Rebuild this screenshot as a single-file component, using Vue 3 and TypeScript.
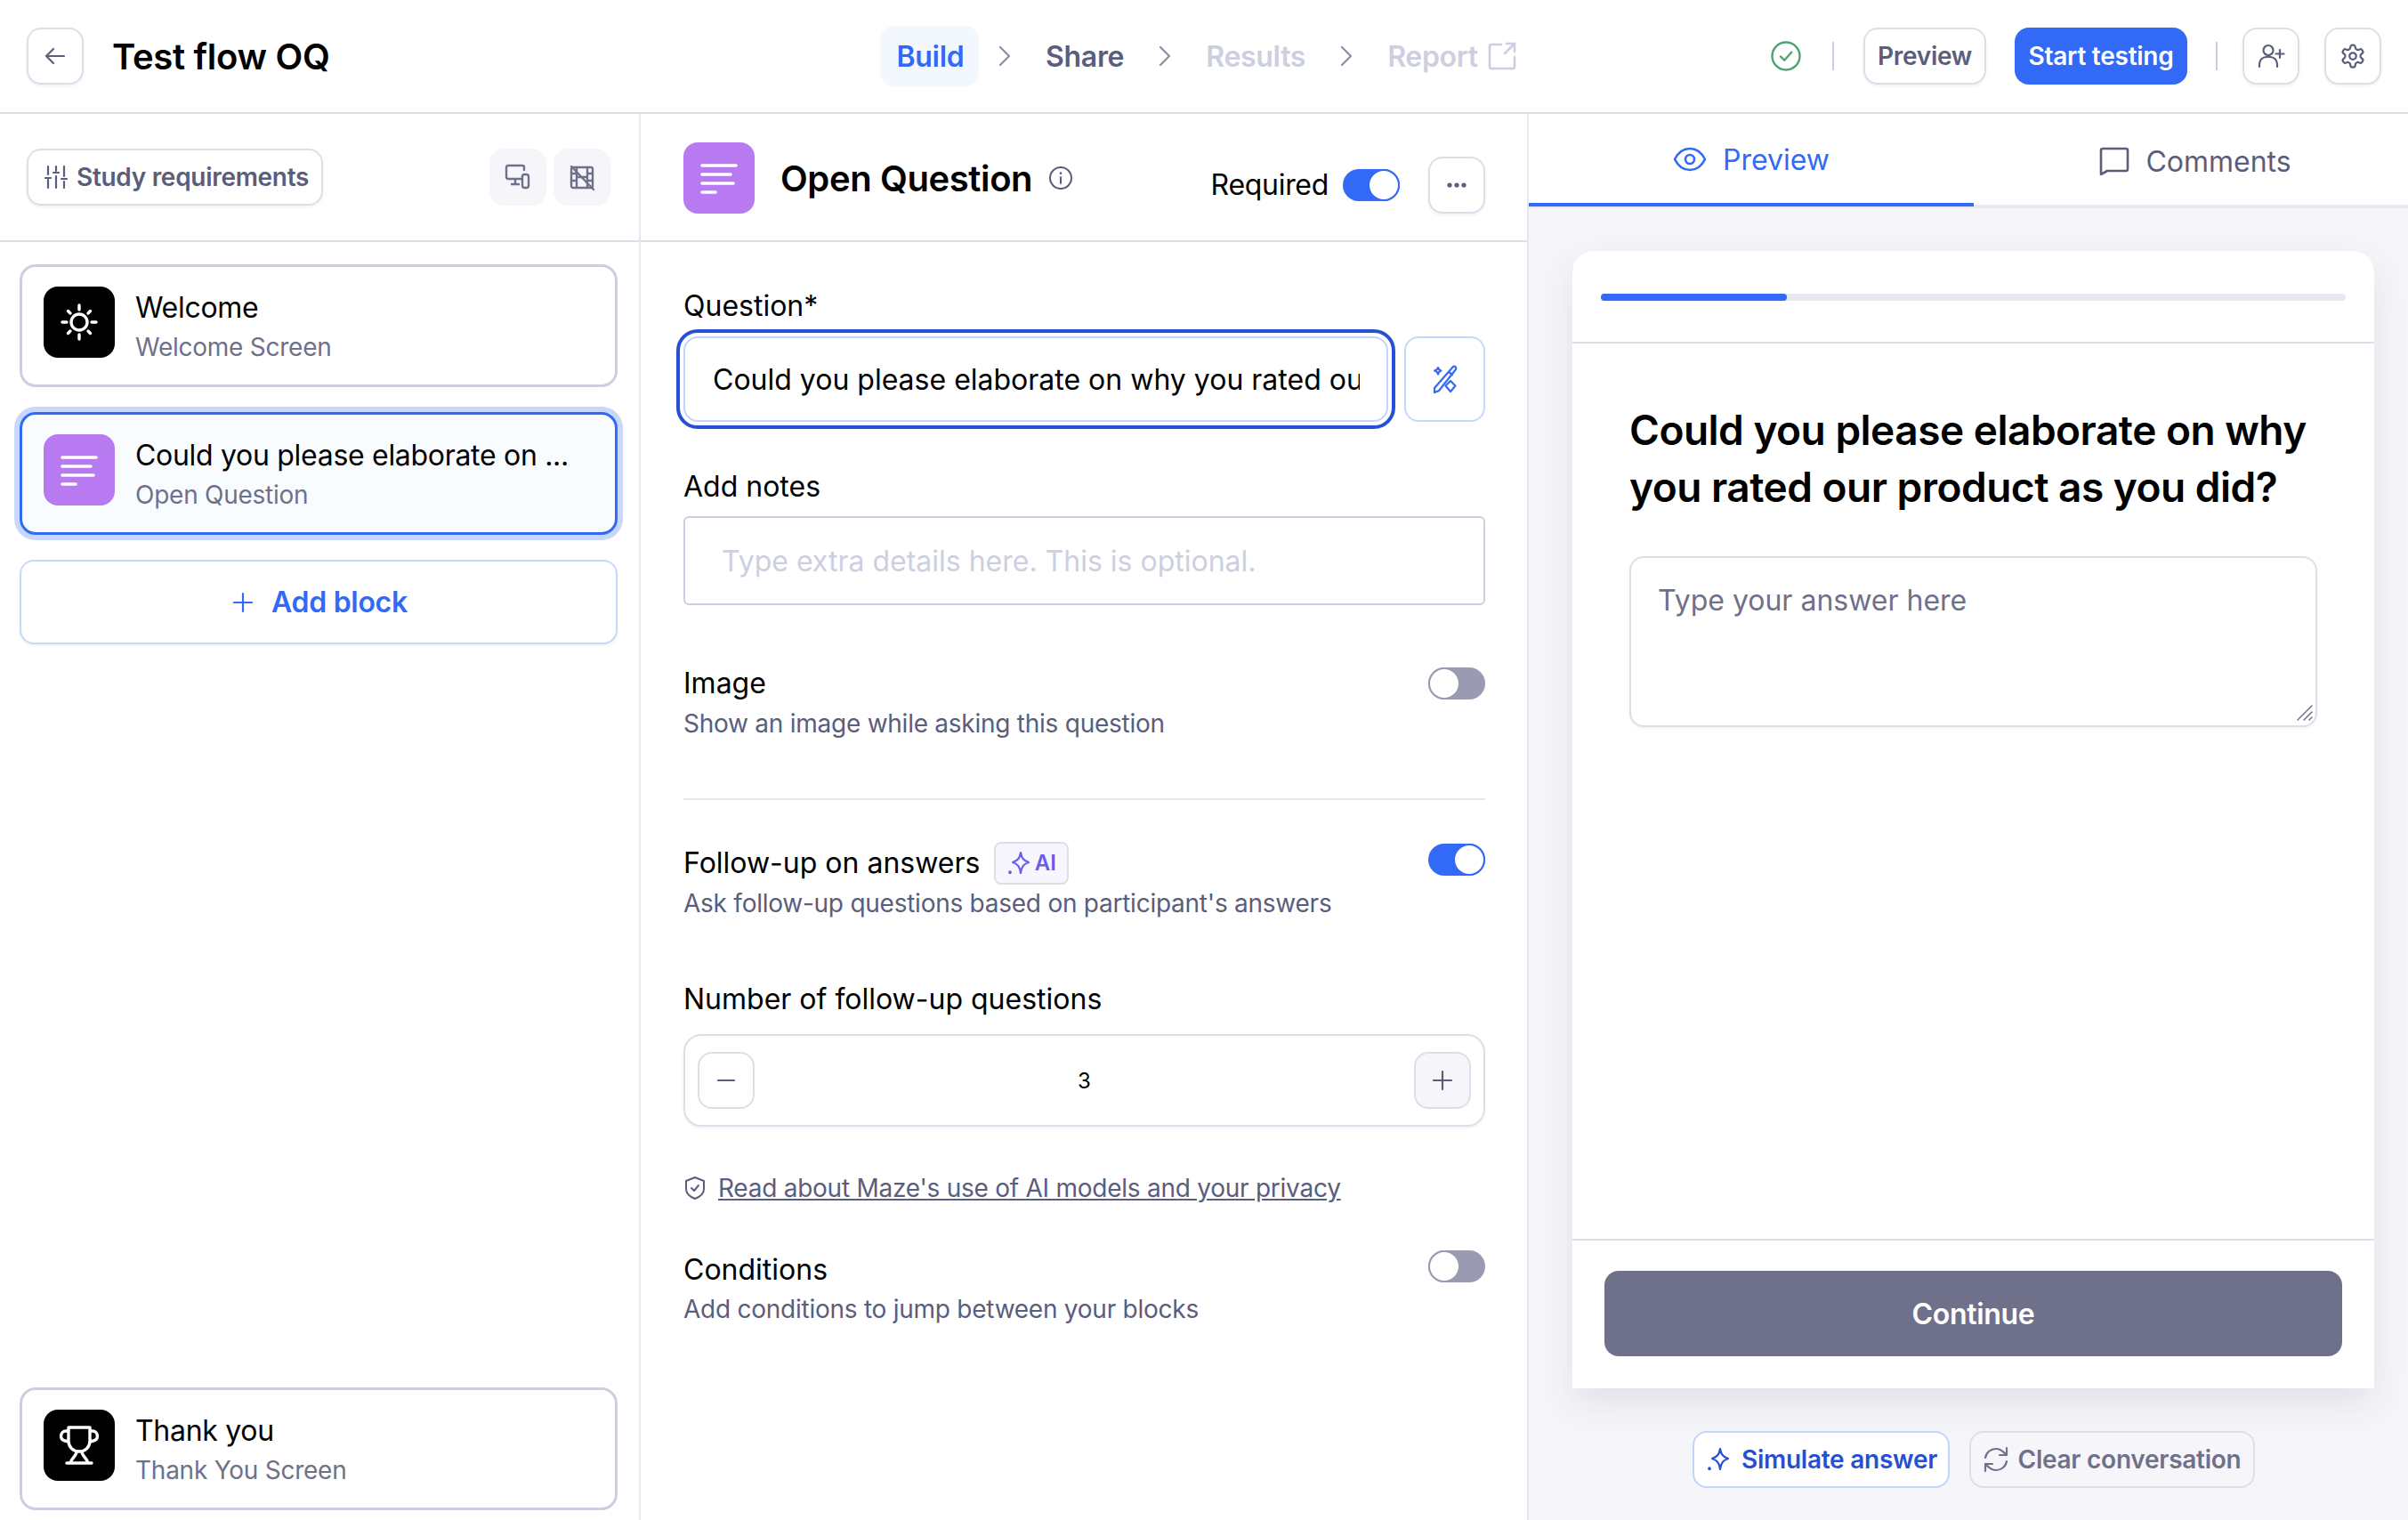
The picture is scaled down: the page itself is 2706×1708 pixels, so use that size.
<template>
  <div class="page">
    <header class="topbar">
      <div class="top-left">
        <button class="icon-btn">
          <svg width="32" height="32" viewBox="0 0 32 32" fill="none" stroke="#5a5d7c" stroke-width="2.2" stroke-linecap="round" stroke-linejoin="round"><path d="M26 16H7M14 8l-8 8 8 8" /></svg>
        </button>
        <h1 class="flow-title">Test flow OQ</h1>
      </div>
      <nav class="steps">
        <span class="step active">Build</span>
        <svg class="chev first" width="16" height="28" viewBox="0 0 16 28" fill="none"><path d="M3 4l10 10L3 24" /></svg>
        <span class="step share">Share</span>
        <svg class="chev" width="16" height="28" viewBox="0 0 16 28" fill="none"><path d="M3 4l10 10L3 24" /></svg>
        <span class="step off results">Results</span>
        <svg class="chev" width="16" height="28" viewBox="0 0 16 28" fill="none"><path d="M3 4l10 10L3 24" /></svg>
        <span class="step off report">Report</span>
        <svg class="ext" width="32" height="32" viewBox="0 0 32 32" fill="none" stroke="#cdcfe0" stroke-width="2.6" stroke-linecap="round" stroke-linejoin="round"><path d="M15 3H4a2 2 0 0 0-2 2v23a2 2 0 0 0 2 2h24a2 2 0 0 0 2-2V17M19 13 30 2M21 2h9v9" /></svg>
      </nav>
      <div class="top-right">
        <svg class="saved" width="36" height="36" viewBox="0 0 36 36" fill="none" stroke="#4fa373" stroke-width="2.4" stroke-linecap="round" stroke-linejoin="round"><circle cx="18" cy="18" r="15.5" /><path d="M12 18.5l4.2 4.2 8-9" /></svg>
        <span class="sep first"></span>
        <button class="btn plain">Preview</button>
        <button class="btn primary">Start testing</button>
        <span class="sep"></span>
        <button class="icon-btn">
          <svg width="32" height="32" viewBox="0 0 32 32" fill="none" stroke="#5a5d7c" stroke-width="2.2" stroke-linecap="round" stroke-linejoin="round"><circle cx="13" cy="9.5" r="5.5" /><path d="M3 28v-3a8 8 0 0 1 8-8h4a8 8 0 0 1 8 8v3M26 9v9M21.5 13.5h9" /></svg>
        </button>
        <button class="icon-btn gear">
          <svg width="30" height="30" viewBox="0 0 24 24" fill="none" stroke="#5a5d7c" stroke-width="1.8" stroke-linecap="round" stroke-linejoin="round"><path d="M12.22 2h-.44a2 2 0 0 0-2 2v.18a2 2 0 0 1-1 1.730l-.43.25a2 2 0 0 1-2 0l-.15-.08a2 2 0 0 0-2.730.73l-.22.38a2 2 0 0 0 .73 2.730l.15.1a2 2 0 0 1 1 1.720v.51a2 2 0 0 1-1 1.740l-.15.09a2 2 0 0 0-.73 2.730l.22.38a2 2 0 0 0 2.730.73l.15-.08a2 2 0 0 1 2 0l.43.25a2 2 0 0 1 1 1.730V20a2 2 0 0 0 2 2h.44a2 2 0 0 0 2-2v-.18a2 2 0 0 1 1-1.730l.43-.25a2 2 0 0 1 2 0l.15.08a2 2 0 0 0 2.730-.73l.22-.39a2 2 0 0 0-.73-2.730l-.15-.08a2 2 0 0 1-1-1.740v-.5a2 2 0 0 1 1-1.740l.15-.09a2 2 0 0 0 .73-2.730l-.22-.38a2 2 0 0 0-2.730-.73l-.15.08a2 2 0 0 1-2 0l-.43-.25a2 2 0 0 1-1-1.730V4a2 2 0 0 0-2-2z" /><circle cx="12" cy="12" r="3" /></svg>
        </button>
      </div>
    </header>

    <div class="columns">
      <aside class="left">
        <div class="left-head">
          <button class="req-btn">
            <svg width="26" height="28" viewBox="0 0 26 28" fill="none" stroke="#5a5d7c" stroke-width="2.2" stroke-linecap="round"><path d="M4 2v9M4 17v9M13 2v5M13 13v13M22 2v11M22 19v7M1 15h6M10 9h6M19 16h6" /></svg>
            Study requirements
          </button>
          <div class="head-icons">
            <button class="soft-btn">
              <svg width="30" height="30" viewBox="0 0 30 30" fill="none" stroke="#6e7189" stroke-width="2.400" stroke-linecap="round" stroke-linejoin="round"><path d="M19 17H4a2 2 0 0 1-2-2V4a2 2 0 0 1 2-2h16a2 2 0 0 1 2 2v3M12 17v6M8 23h8" /><rect x="20" y="12" width="7" height="15" rx="2.500" /></svg>
            </button>
            <button class="soft-btn">
              <svg width="30" height="30" viewBox="0 0 30 30" fill="none" stroke="#6e7189" stroke-width="2.400" stroke-linecap="round" stroke-linejoin="round"><path d="M3 3l25 26" /><rect x="3" y="4" width="24" height="23" rx="2" /><path d="M9 4v23M21 4v23M3 11h6M3 19h6M21 11h6M21 19h6M9 15h12" /></svg>
            </button>
          </div>
        </div>

        <div class="block-list">
          <div class="block">
            <span class="tile dark">
              <svg width="80" height="80" viewBox="0 0 80 80" fill="none" stroke="#fff" stroke-width="3.400" stroke-linecap="round"><circle cx="40" cy="40" r="9" /><path d="M40 21v5M40 54v5M21 40h5M54 40h5M27.500 27.500l2.500 2.500M50 50l2.500 2.500M27.500 52.500 30 50M50 30l2.500-2.500" /></svg>
            </span>
            <div class="block-text">
              <div class="block-name">Welcome</div>
              <div class="block-type">Welcome Screen</div>
            </div>
          </div>
          <div class="block selected">
            <span class="tile purple">
              <svg width="80" height="80" viewBox="0 0 80 80" fill="none" stroke="#fff" stroke-width="3.600" stroke-linecap="round"><path d="M21 26h38M21 36h32M21 46h35M21 56h15" /></svg>
            </span>
            <div class="block-text">
              <div class="block-name">Could you please elaborate on ...</div>
              <div class="block-type">Open Question</div>
            </div>
          </div>
          <button class="add-block">
            <svg width="24" height="24" viewBox="0 0 24 24" fill="none" stroke="#3269f6" stroke-width="2.200" stroke-linecap="round"><path d="M12 2v20M2 12h20" /></svg>
            Add block
          </button>
        </div>

        <div class="block last">
          <span class="tile dark">
            <svg width="80" height="80" viewBox="0 0 80 80" fill="none" stroke="#fff" stroke-width="3.400" stroke-linecap="round" stroke-linejoin="round"><path d="M28 20h24v15c0 7-5 12-12 12s-12-5-12-12zM28 24h-3c-6 0-8 9-1 11l4 1M52 24h3c6 0 8 9 1 11l-4 1M37 47c0 5-6 8-7 13M43 47c0 5 6 8 7 13M26 60h28" /></svg>
          </span>
          <div class="block-text">
            <div class="block-name">Thank you</div>
            <div class="block-type">Thank You Screen</div>
          </div>
        </div>
      </aside>

      <main class="middle">
        <div class="mid-head">
          <span class="tile purple">
            <svg width="80" height="80" viewBox="0 0 80 80" fill="none" stroke="#fff" stroke-width="3.600" stroke-linecap="round"><path d="M21 26h38M21 36h32M21 46h35M21 56h15" /></svg>
          </span>
          <h2 class="mid-title">Open Question</h2>
          <svg class="info" width="28" height="28" viewBox="0 0 28 28" fill="none" stroke="#5a5d7c" stroke-width="2" stroke-linecap="round"><circle cx="14" cy="14" r="12" /><path d="M14 13v7" /><path d="M14 8.500v.2" stroke-width="2.600" /></svg>
          <div class="required">
            <span>Required</span>
            <span class="toggle" :class="{ on: required }"></span>
            <button class="icon-btn dots">
              <svg width="24" height="8" viewBox="0 0 24 8" fill="#5a5d7c"><circle cx="4" cy="4" r="2.600" /><circle cx="12" cy="4" r="2.600" /><circle cx="20" cy="4" r="2.600" /></svg>
            </button>
          </div>
        </div>

        <div class="form">
          <label class="label">Question*</label>
          <div class="question-row">
            <input class="question-input" :value="question" readonly />
            <button class="wand-btn">
              <svg width="30" height="34" viewBox="0 0 30 34" fill="none" stroke="#3269f6" stroke-width="2.200" stroke-linecap="round" stroke-linejoin="round"><path d="M24 3c2-1 4 1 3 3L8 30l-5 2 0-5zM19 9l4 3" /><path d="M7 4c.5 2 1.500 3 3.500 3.500C8.500 8 7.500 9.500 7 11.500 6.500 9.500 5.500 8 3 7.500 5.500 7 6.500 6 7 4zM21 19l5.500 5.500L21 31l-5.500-6.500z" /></svg>
            </button>
          </div>

          <label class="label notes-label">Add notes</label>
          <input class="notes-input" placeholder="Type extra details here. This is optional." />

          <div class="option image-opt">
            <div>
              <div class="opt-name">Image</div>
              <div class="opt-desc">Show an image while asking this question</div>
            </div>
            <span class="toggle"></span>
          </div>

          <div class="divider"></div>

          <div class="option">
            <div>
              <div class="opt-name">
                Follow-up on answers
                <span class="ai-chip">
                  <svg width="26" height="30" viewBox="0 0 26 30" fill="none" stroke="#6a5de8" stroke-width="2.200" stroke-linecap="round" stroke-linejoin="round"><path d="M15 3c1 6 3 9 9 11-6 2-8 5-9 12-1-7-3-10-9-12 6-2 8-5 9-11z" /><path d="M3 25v.5" stroke-width="3.600" /></svg>
                  AI
                </span>
              </div>
              <div class="opt-desc">Ask follow-up questions based on participant's answers</div>
            </div>
            <span class="toggle on"></span>
          </div>

          <label class="label count-label">Number of follow-up questions</label>
          <div class="stepper">
            <button class="step-btn">
              <svg width="24" height="24" viewBox="0 0 24 24" fill="none" stroke="#5a5d7c" stroke-width="2.200" stroke-linecap="round"><path d="M3 12h18" /></svg>
            </button>
            <span class="count">{{ followUps }}</span>
            <button class="step-btn filled">
              <svg width="24" height="24" viewBox="0 0 24 24" fill="none" stroke="#5a5d7c" stroke-width="2.200" stroke-linecap="round"><path d="M12 2v20M2 12h20" /></svg>
            </button>
          </div>

          <div class="privacy">
            <svg width="26" height="28" viewBox="0 0 26 28" fill="none" stroke="#5a5d7c" stroke-width="2" stroke-linecap="round" stroke-linejoin="round"><path d="M13 2l10 4v9c0 6-5 9-10 11C8 24 3 21 3 15V6z" /><path d="M9 14l3 3 5-6" /></svg>
            <a class="privacy-link">Read about Maze's use of AI models and your privacy</a>
          </div>

          <div class="option cond-opt">
            <div>
              <div class="opt-name">Conditions</div>
              <div class="opt-desc">Add conditions to jump between your blocks</div>
            </div>
            <span class="toggle"></span>
          </div>
        </div>
      </main>

      <section class="right">
        <div class="tabs">
          <div class="tab current">
            <svg width="38" height="28" viewBox="0 0 38 28" fill="none" stroke="#3269f6" stroke-width="2.600" stroke-linejoin="round"><path d="M2 14C6 6 12 2 19 2s13 4 17 12c-4 8-10 12-17 12S6 22 2 14z" /><circle cx="19" cy="14" r="5" /></svg>
            Preview
          </div>
          <div class="tab comments">
            <svg width="34" height="32" viewBox="0 0 34 32" fill="none" stroke="#5a5d7c" stroke-width="2.600" stroke-linejoin="round"><path d="M2 4a2 2 0 0 1 2-2h26a2 2 0 0 1 2 2v21a2 2 0 0 1-2 2H9l-7 4z" /></svg>
            Comments
          </div>
        </div>

        <div class="stage">
          <div class="card">
            <div class="card-top">
              <div class="progress"><div class="progress-fill" :style="{ width: progress + '%' }"></div></div>
            </div>
            <div class="card-body">
              <h3 class="card-question">Could you please elaborate on why you rated our product as you did?</h3>
              <div class="answer-wrap">
                <textarea class="answer" placeholder="Type your answer here" readonly></textarea>
                <svg class="grip" width="20" height="20" viewBox="0 0 20 20" fill="none" stroke="#6e7189" stroke-width="1.500" stroke-linecap="round"><path d="M2 18 18 2M9 18l9-9M15 18l3-3" /></svg>
              </div>
            </div>
            <div class="card-foot">
              <button class="continue">Continue</button>
            </div>
          </div>
          <div class="stage-actions">
            <button class="simulate">
              <svg width="26" height="30" viewBox="0 0 26 30" fill="none" stroke="#2650d4" stroke-width="2.200" stroke-linecap="round" stroke-linejoin="round"><path d="M15 3c1 6 3 9 9 11-6 2-8 5-9 12-1-7-3-10-9-12 6-2 8-5 9-11z" /><path d="M3 25v.5" stroke-width="3.600" /></svg>
              Simulate answer
            </button>
            <button class="clear">
              <svg width="30" height="30" viewBox="0 0 30 30" fill="none" stroke="#6e7189" stroke-width="2.200" stroke-linecap="round" stroke-linejoin="round"><path d="M3 13C4 7 9 3 15 3c4 0 7 2 10 5l2 2M27 2v8h-8M27 17c-1 6-6 10-12 10-4 0-7-2-10-5l-2-2M3 28v-8h8" /></svg>
              Clear conversation
            </button>
          </div>
        </div>
      </section>
    </div>
  </div>
</template>

<script setup lang="ts">
import { ref } from "vue";

const required = ref(true);
const followUps = ref(3);
const progress = ref(25);
const question = ref("Could you please elaborate on why you rated our product as you did?");
</script>

<style>
html,
body {
  margin: 0;
  background: #fff;
}
</style>

<style scoped>
.page {
  width: 2706px;
  height: 1708px;
  overflow: hidden;
  display: flex;
  flex-direction: column;
  font-family: Inter, "Liberation Sans", sans-serif;
  color: #000;
  background: #fff;
}

button {
  font-family: inherit;
  cursor: pointer;
}

.topbar {
  height: 128px;
  flex: none;
  box-sizing: border-box;
  border-bottom: 2px solid #dddee9;
  display: grid;
  grid-template-columns: 959px 720px 1fr;
  align-items: center;
  padding: 0 30px;
}

.top-left {
  display: flex;
  align-items: center;
  gap: 32px;
}

.icon-btn {
  width: 64px;
  height: 64px;
  padding: 0;
  flex: none;
  background: #fff;
  border: 2px solid #dddee9;
  border-radius: 16px;
  box-shadow: 0 2px 3px rgba(40, 40, 80, 0.06);
  display: flex;
  align-items: center;
  justify-content: center;
}

.flow-title {
  margin: 0;
  font-size: 40px;
  font-weight: 600;
  letter-spacing: -0.3px;
}

.steps {
  display: flex;
  align-items: center;
  font-size: 32px;
  font-weight: 600;
  letter-spacing: -0.3px;
}

.step {
  color: #5a5d7c;
}

.step.active {
  width: 111px;
  height: 68px;
  box-sizing: border-box;
  padding-left: 2px;
  display: flex;
  align-items: center;
  justify-content: center;
  background: #f3f8ff;
  border-radius: 16px;
  color: #3269f6;
}

.step.off {
  color: #cdcfe0;
}

.chev {
  flex: none;
  stroke: #8b8da6;
  stroke-width: 2.200;
  stroke-linecap: round;
  stroke-linejoin: round;
  margin: 0 38px;
}

.chev.first {
  margin-left: 21px;
}

.ext {
  margin-left: 11px;
}

.top-right {
  display: flex;
  align-items: center;
  justify-content: flex-end;
}

.sep {
  width: 2px;
  height: 32px;
  background: #cdcfe0;
  margin: 0 28px 0 32px;
}

.sep.first {
  margin: 0 33px 0 34px;
}

.btn {
  height: 64px;
  box-sizing: border-box;
  border-radius: 16px;
  font-size: 28px;
  font-weight: 600;
  letter-spacing: -0.25px;
}

.btn.plain {
  width: 138px;
  padding: 0;
  background: #fff;
  color: #5a5d7c;
  border: 2px solid #dddee9;
  box-shadow: 0 2px 3px rgba(40, 40, 80, 0.06);
  margin-right: 32px;
}

.btn.primary {
  width: 194px;
  padding: 0;
  background: #3269f6;
  color: #fff;
  border: none;
}

.gear {
  margin-left: 28px;
}

.columns {
  flex: 1;
  min-height: 0;
  display: grid;
  grid-template-columns: 720px 998px 1fr;
}

.left {
  box-sizing: border-box;
  border-right: 2px solid #e6e7f0;
  display: flex;
  flex-direction: column;
}

.left-head {
  height: 144px;
  flex: none;
  box-sizing: border-box;
  border-bottom: 2px solid #dddee9;
  padding: 0 32px 0 30px;
  display: flex;
  align-items: center;
  justify-content: space-between;
}

.req-btn {
  height: 64px;
  width: 333px;
  box-sizing: border-box;
  background: #fff;
  border: 2px solid #dddee9;
  border-radius: 16px;
  box-shadow: 0 2px 3px rgba(40, 40, 80, 0.06);
  padding: 0 0 0 18px;
  display: flex;
  align-items: center;
  gap: 10px;
  white-space: nowrap;
  color: #5a5d7c;
  font-size: 28px;
  font-weight: 600;
  letter-spacing: -0.3px;
}

.head-icons {
  display: flex;
  gap: 8px;
}

.soft-btn {
  width: 64px;
  height: 64px;
  padding: 0;
  border: none;
  border-radius: 16px;
  background: #f6f6fa;
  display: flex;
  align-items: center;
  justify-content: center;
}

.block-list {
  flex: 1;
  padding: 25px 24px 0 22px;
  display: flex;
  flex-direction: column;
  gap: 28px;
}

.block {
  height: 138px;
  box-sizing: border-box;
  border: 3px solid #cdcfe0;
  border-radius: 18px;
  background: #fff;
  padding: 0 24px;
  display: flex;
  align-items: center;
  gap: 23px;
}

.block.selected {
  background: #f9fcff;
  border-color: #3269f6;
  box-shadow: 0 0 0 6px #c8d8fb;
}

.block.last {
  flex: none;
  margin: 0 24px 11px 22px;
}

.tile {
  width: 80px;
  height: 80px;
  flex: none;
  border-radius: 16px;
  display: block;
}

.block .tile {
  margin-top: -8px;
}

.tile svg {
  display: block;
}

.tile.dark {
  background: #000;
}

.tile.purple {
  background: #b87af0;
}

.block-text {
  margin-top: 4px;
}

.block-name {
  font-size: 32px;
  line-height: 44px;
  letter-spacing: -0.3px;
}

.block-type {
  font-size: 28px;
  line-height: 44px;
  letter-spacing: -0.25px;
  color: #6e7189;
}

.add-block {
  height: 95px;
  box-sizing: border-box;
  background: #fff;
  border: 2px solid #c8d8fb;
  border-radius: 16px;
  box-shadow: 0 2px 3px rgba(40, 40, 80, 0.05);
  padding-left: 9px;
  color: #3269f6;
  font-size: 32px;
  font-weight: 600;
  letter-spacing: -0.3px;
  display: flex;
  align-items: center;
  justify-content: center;
  gap: 20px;
}

.middle {
  box-sizing: border-box;
  border-right: 2px solid #e6e7f0;
  display: flex;
  flex-direction: column;
}

.mid-head {
  height: 144px;
  flex: none;
  box-sizing: border-box;
  border-bottom: 2px solid #dddee9;
  padding: 2px 47px 0 48px;
  display: flex;
  align-items: center;
}

.mid-title {
  margin: 0 0 0 29px;
  font-size: 40px;
  font-weight: 600;
  letter-spacing: -0.4px;
}

.info {
  margin-left: 18px;
}

.required {
  margin-left: auto;
  padding-top: 15px;
  display: flex;
  align-items: center;
  font-size: 32px;
  letter-spacing: -0.3px;
}

.required .toggle {
  margin: 0 32px 0 16px;
}

.dots {
  width: 64px;
}

.toggle {
  width: 64px;
  height: 36px;
  flex: none;
  box-sizing: border-box;
  display: block;
  border-radius: 18px;
  background: #9a9ab2;
  position: relative;
}

.toggle::after {
  content: "";
  position: absolute;
  top: 0;
  left: 0;
  width: 36px;
  height: 36px;
  box-sizing: border-box;
  border-radius: 50%;
  background: #fff;
  border: 2px solid #9a9ab2;
}

.toggle.on {
  background: #3269f6;
}

.toggle.on::after {
  left: 28px;
  border-color: #3269f6;
}

.form {
  padding: 50px 47px 0 48px;
  display: flex;
  flex-direction: column;
}

.label {
  font-size: 32px;
  line-height: 44px;
}

.question-row {
  margin-top: 12px;
  display: flex;
  gap: 18px;
}

.question-input {
  flex: 1;
  min-width: 0;
  height: 96px;
  box-sizing: border-box;
  border: 2px solid #c2d4fb;
  border-radius: 16px;
  outline: 4px solid #2650d4;
  outline-offset: 4px;
  padding: 0 30px 0 31px;
  font: inherit;
  font-size: 32px;
  color: #000;
  background: #fff;
}

.wand-btn {
  width: 91px;
  height: 96px;
  flex: none;
  padding: 0;
  background: #fff;
  border: 2px solid #c8d8fb;
  border-radius: 16px;
  display: flex;
  align-items: center;
  justify-content: center;
}

.notes-label {
  margin-top: 51px;
}

.notes-input {
  margin-top: 11px;
  height: 100px;
  box-sizing: border-box;
  border: 2px solid #cdcfe0;
  border-radius: 6px;
  padding: 0 41px;
  font: inherit;
  font-size: 32px;
  background: #fff;
}

.notes-input::placeholder {
  color: #cdcfe0;
}

.option {
  display: flex;
  justify-content: space-between;
  align-items: flex-start;
}

.image-opt {
  margin-top: 66px;
}

.cond-opt {
  margin-top: 48px;
}

.cond-opt .opt-desc {
  margin-top: 0;
}

.opt-name {
  font-size: 32px;
  line-height: 44px;
  display: flex;
  align-items: center;
}

.opt-desc {
  margin-top: 1px;
  font-size: 28px;
  line-height: 44px;
  letter-spacing: -0.25px;
  color: #5a5d7c;
}

.image-opt .toggle {
  margin-top: 4px;
}

.divider {
  height: 2px;
  margin: 62px 0 49px;
  background: #e6e7f0;
}

.ai-chip {
  margin: -2px 0 -2px 16px;
  width: 84px;
  height: 48px;
  box-sizing: border-box;
  background: #f7f6ff;
  border: 2px solid #dddee9;
  border-radius: 8px;
  display: inline-flex;
  align-items: center;
  justify-content: center;
  gap: 5px;
  color: #6a5de8;
  font-size: 24px;
  font-weight: 600;
}

.count-label {
  margin-top: 64px;
}

.stepper {
  margin-top: 17px;
  height: 104px;
  box-sizing: border-box;
  border: 2px solid #dddee9;
  border-radius: 20px;
  box-shadow: 0 2px 3px rgba(40, 40, 80, 0.05);
  padding: 0 14px;
  display: flex;
  align-items: center;
  justify-content: space-between;
}

.step-btn {
  width: 64px;
  height: 64px;
  padding: 0;
  background: #fff;
  border: 2px solid #dddee9;
  border-radius: 16px;
  display: flex;
  align-items: center;
  justify-content: center;
}

.step-btn.filled {
  background: #f6f6fa;
}

.count {
  font-size: 24px;
}

.privacy {
  margin-top: 47px;
  display: flex;
  align-items: center;
  gap: 13px;
  font-size: 28px;
  line-height: 44px;
  letter-spacing: -0.25px;
  color: #5a5d7c;
}

.privacy-link {
  text-decoration: underline;
}

.right {
  display: flex;
  flex-direction: column;
  min-width: 0;
}

.tabs {
  height: 106px;
  flex: none;
  box-sizing: border-box;
  border-bottom: 4px solid #e9e9f1;
  display: grid;
  grid-template-columns: 500px 1fr;
}

.tab {
  height: 104px;
  box-sizing: border-box;
  padding-top: 2px;
  display: flex;
  align-items: center;
  justify-content: center;
  gap: 18px;
  font-size: 32px;
  color: #5a5d7c;
}

.tab.comments {
  padding-left: 10px;
}

.tab.current {
  color: #3269f6;
  border-bottom: 4px solid #3269f6;
}

.stage {
  flex: 1;
  background: #f6f6fa;
  padding: 48px 38px 0 49px;
  display: flex;
  flex-direction: column;
}

.card {
  height: 1278px;
  flex: none;
  background: #fff;
  border-radius: 24px 24px 0 0;
  box-shadow: 0 16px 40px rgba(30, 30, 60, 0.1);
  display: flex;
  flex-direction: column;
}

.card-top {
  height: 104px;
  flex: none;
  box-sizing: border-box;
  border-bottom: 2px solid #dddee9;
  padding: 48px 32px 0;
}

.progress {
  height: 8px;
  border-radius: 4px;
  background: #e6e7f0;
}

.progress-fill {
  height: 100%;
  border-radius: 4px;
  background: #3269f6;
}

.card-body {
  flex: 1;
  padding: 65px 64px 0 64px;
}

.card-question {
  margin: 0;
  font-size: 46px;
  font-weight: 600;
  line-height: 64px;
  letter-spacing: -0.5px;
}

.answer-wrap {
  margin-top: 46px;
  position: relative;
}

.answer {
  display: block;
  width: 100%;
  height: 192px;
  box-sizing: border-box;
  border: 2px solid #dddee9;
  border-radius: 16px;
  box-shadow: 0 2px 3px rgba(40, 40, 80, 0.05);
  padding: 26px 30px;
  resize: none;
  outline: none;
  font: inherit;
  font-size: 32px;
  line-height: 44px;
}

.answer::placeholder {
  color: #6e7189;
}

.grip {
  position: absolute;
  right: 4px;
  bottom: 6px;
}

.card-foot {
  height: 168px;
  flex: none;
  box-sizing: border-box;
  border-top: 2px solid #dddee9;
  padding: 34px 36px 0 36px;
}

.continue {
  width: 100%;
  height: 96px;
  border: none;
  border-radius: 16px;
  background: #6e7189;
  color: #fff;
  font-size: 32px;
  font-weight: 600;
  letter-spacing: -0.3px;
}

.stage-actions {
  margin-top: 48px;
  display: flex;
  justify-content: center;
  gap: 22px;
}

.simulate,
.clear {
  height: 64px;
  box-sizing: border-box;
  border-radius: 16px;
  padding: 0;
  display: flex;
  align-items: center;
  justify-content: center;
  gap: 10px;
  font-size: 28px;
  font-weight: 600;
  letter-spacing: -0.25px;
}

.simulate {
  width: 289px;
  padding-left: 3px;
  gap: 13px;
  background: #fff;
  border: 2px solid #c2d4fb;
  color: #2650d4;
}

.clear {
  width: 321px;
  background: #f6f6fa;
  border: 2px solid #dddee9;
  color: #6e7189;
}
</style>
